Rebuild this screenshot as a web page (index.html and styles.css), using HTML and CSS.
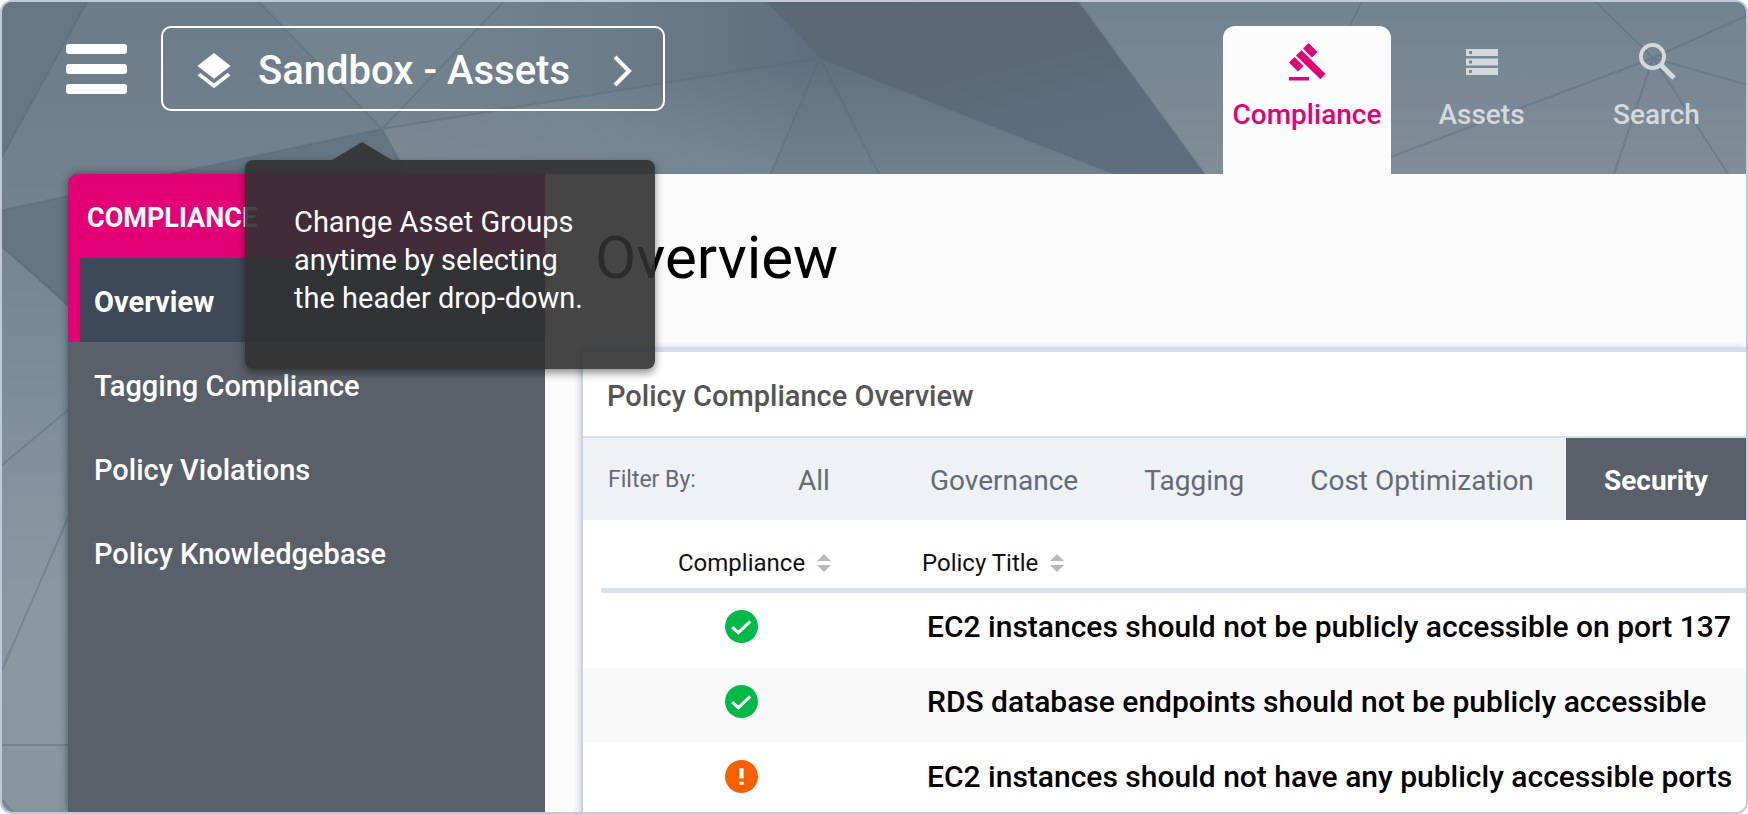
FILE: index.html
```html
<!DOCTYPE html>
<html lang="en">
<head>
<meta charset="utf-8">
<title>Policy Compliance Overview</title>
<link rel="stylesheet" href="styles.css">
</head>
<body>
<div class="app">
  <svg class="backdrop" viewBox="2 2 1744 810" preserveAspectRatio="xMinYMin slice" aria-hidden="true">
    <defs>
      <linearGradient id="base" x1="0" y1="0" x2="0" y2="1">
        <stop offset="0" stop-color="#6b7b88"/><stop offset=".22" stop-color="#72818e"/><stop offset=".5" stop-color="#7f8e9b"/><stop offset=".75" stop-color="#8a98a2"/><stop offset="1" stop-color="#87969e"/>
      </linearGradient>
      <linearGradient id="fan" x1="0" y1="0" x2="0" y2="1">
        <stop offset="0" stop-color="#5f707f"/><stop offset="1" stop-color="#71818e"/>
      </linearGradient>
      <linearGradient id="mid" x1="0" y1="0" x2="1" y2="0">
        <stop offset="0" stop-color="#74848f"/><stop offset=".5" stop-color="#6c7c89"/><stop offset="1" stop-color="#5f6f7f"/>
      </linearGradient>
      <linearGradient id="slope" x1="0" y1="1" x2="1" y2="0">
        <stop offset="0" stop-color="#7b8994"/><stop offset=".5" stop-color="#748491"/><stop offset="1" stop-color="#5f6f7f"/>
      </linearGradient>
      <linearGradient id="dark" x1="0" y1="0" x2=".6" y2="1">
        <stop offset="0" stop-color="#5a6975"/><stop offset=".5" stop-color="#5a6975"/><stop offset=".7" stop-color="#5e6d7d"/><stop offset="1" stop-color="#5e6e7f"/>
      </linearGradient>
      <linearGradient id="east" x1="0" y1="0" x2="0" y2="1">
        <stop offset="0" stop-color="#728390"/><stop offset="1" stop-color="#808e98"/>
      </linearGradient>
    </defs>
    <rect width="1748" height="814" fill="url(#base)"/>
    <path d="M0 0H88L2 157H0Z" fill="#667682"/>
    <path d="M257 0H505L382 129Z" fill="#738390"/>
    <path d="M505 0H765L820 58L382 129Z" fill="url(#mid)"/>
    <path d="M382 129L820 58L768 180H410Z" fill="url(#slope)"/>
    <path d="M820 58L768 180H1130Z" fill="url(#fan)"/>
    <path d="M765 0H1077L1209 180H1130L820 58Z" fill="url(#dark)"/>
    <path d="M1077 0H1748V180H1209Z" fill="url(#east)"/>
    <path d="M382 129L2 210V247L68 307L180 400L410 180Z" fill="#647583"/>
    <g class="seams">
      <path d="M88 0L2 157M257 0L382 129L505 0M382 129L820 58L765 0M930 0L820 58L768 180M820 58L882 180M820 58L1130 180M2 210L382 129L410 180M2 247L180 400M1077 0L1209 180M1363 0L1345 35M1594 0L1653 58L1748 15M1748 85L1653 58L1380 161M1653 58L1612 180M1653 58L1732 180M2 465L80 400M2 670L80 490M0 745H80M0 798L14 814"/>
    </g>
  </svg>

  <header class="topbar">
    <button class="menu" aria-label="Open menu"><span></span><span></span><span></span></button>
    <div class="picker">
      <button class="asset-group">
        <svg class="layers" viewBox="3 2 18 19.5" aria-hidden="true"><path fill="#fff" d="M11.99 18.54l-7.37-5.73L3 14.07l9 7 9-7-1.63-1.27-7.38 5.74zM12 16l7.36-5.73L21 9l-9-7-9 7 1.63 1.27L12 16z"/></svg>
        <span>Sandbox - Assets</span>
        <svg class="chevron" viewBox="0 0 20 32" aria-hidden="true"><path d="M3 2L17 16L3 30"/></svg>
      </button>
      <div class="tooltip" role="tooltip">Change Asset Groups<br>anytime by selecting<br>the header drop-down.</div>
    </div>
    <nav class="sections" aria-label="Sections">
      <a class="section current" href="#compliance">
        <svg viewBox="0 0 38 38" aria-hidden="true"><g fill="#e20074"><rect x="1" y="34" width="20" height="3.500"/><path d="M8 12.500L13.500 7.200L37.500 31L32.500 36.200Z"/><path d="M15 5.500L20.500 0L29.500 9L24 14.500Z"/><path d="M1 19.500L6.500 14L15.500 23L10 28.500Z"/></g></svg>
        Compliance
      </a>
      <a class="section" href="#assets">
        <svg viewBox="0 0 38 38" aria-hidden="true"><path fill="#d4d9dd" fill-rule="evenodd" d="M3 6H35V13H3ZM6 8V11H9V8ZM3 15.500H35V22.500H3ZM6 17.500V20.500H9V17.500ZM3 25H35V32H3ZM6 27V30H9V27Z"/></svg>
        Assets
      </a>
      <a class="section" href="#search">
        <svg viewBox="0 0 38 38" aria-hidden="true"><g fill="none" stroke="#d4d9dd" stroke-width="3.800"><circle cx="14.500" cy="13.500" r="11.600"/><path d="M23 22L36 35" stroke-width="5"/></g></svg>
        Search
      </a>
    </nav>
  </header>

  <div class="body">
    <aside class="sidebar">
      <h2>COMPLIANCE</h2>
      <nav aria-label="Compliance pages">
        <a class="active" href="#overview">Overview</a>
        <a href="#tagging">Tagging Compliance</a>
        <a href="#violations">Policy Violations</a>
        <a href="#knowledgebase">Policy Knowledgebase</a>
      </nav>
    </aside>
    <main class="main">
      <h1>Overview</h1>
      <section class="panel">
        <h3>Policy Compliance Overview</h3>
        <div class="filters">
          <span class="filter-label">Filter By:</span>
          <button>All</button>
          <button>Governance</button>
          <button>Tagging</button>
          <button>Cost Optimization</button>
          <button class="selected">Security</button>
        </div>
        <table>
          <thead>
            <tr>
              <th scope="col"><button>Compliance <svg viewBox="0 0 14 18" aria-hidden="true"><path d="M0 7L7 0L14 7ZM0 11H14L7 18Z"/></svg></button></th>
              <th scope="col"><button>Policy Title <svg viewBox="0 0 14 18" aria-hidden="true"><path d="M0 7L7 0L14 7ZM0 11H14L7 18Z"/></svg></button></th>
            </tr>
          </thead>
          <tbody>
            <tr>
              <td><svg class="status" viewBox="0 0 32 32" role="img" aria-label="Compliant"><circle cx="16" cy="16" r="16" fill="#00b946"/><path d="M7 16.500L13 22L24.500 11" fill="none" stroke="#fff" stroke-width="3"/></svg></td>
              <td>EC2 instances should not be publicly accessible on port 137</td>
            </tr>
            <tr>
              <td><svg class="status" viewBox="0 0 32 32" role="img" aria-label="Compliant"><circle cx="16" cy="16" r="16" fill="#00b946"/><path d="M7 16.500L13 22L24.500 11" fill="none" stroke="#fff" stroke-width="3"/></svg></td>
              <td>RDS database endpoints should not be publicly accessible</td>
            </tr>
            <tr>
              <td><svg class="status" viewBox="0 0 32 32" role="img" aria-label="Not compliant"><circle cx="16" cy="16" r="16" fill="#f95f00"/><path d="M14 8H18V18H14ZM14 21H18V24H14Z" fill="#fff"/></svg></td>
              <td>EC2 instances should not have any publicly accessible ports</td>
            </tr>
          </tbody>
        </table>
      </section>
    </main>
  </div>
</div>
</body>
</html>
```
FILE: styles.css
```css
* { box-sizing: border-box; }

body {
  margin: 0;
  font-family: Roboto, "Open Sans", sans-serif;
  background: #fff;
}

button { font: inherit; color: inherit; background: none; border: 0; padding: 0; }
a { color: inherit; text-decoration: none; }
h1, h2, h3 { margin: 0; }

.app {
  position: relative;
  display: flex;
  flex-direction: column;
  height: 100vh;
  border: 2px solid #bfc9d7;
  border-radius: 12px;
  overflow: hidden;
}

.backdrop { position: absolute; inset: 0; width: 100%; height: 100%; }
.seams { fill: none; stroke: #586877; stroke-opacity: .4; stroke-width: 2; }

.topbar {
  position: relative;
  z-index: 1;
  display: flex;
  align-items: flex-start;
  padding: 24px 0 0 64px;
}

.menu { display: flex; flex-direction: column; gap: 10px; margin: 18px 34px 0 0; }
.menu span { width: 61px; height: 10px; border-radius: 3px; background: #fff; }

.picker { position: relative; }
.asset-group {
  display: flex;
  align-items: center;
  width: 504px;
  height: 85px;
  padding: 4px 31px 0 34px;
  border: 2px solid #fff;
  border-radius: 10px;
  color: #fff;
  font-size: 40px;
  font-weight: 500;
}
.asset-group .chevron { margin-left: auto; }
.layers { width: 34px; height: 36px; margin-right: 27px; }
.chevron { width: 20px; height: 32px; fill: none; stroke: #fff; stroke-width: 4; }

.tooltip {
  position: absolute;
  top: 134px;
  left: 84px;
  width: 410px;
  height: 209px;
  padding: 43px 49px;
  border-radius: 8px;
  background: rgba(49, 49, 49, .9);
  box-shadow: 0 4px 8px rgba(0, 0, 0, .45);
  color: #fff;
  font-size: 29px;
  line-height: 38px;
  white-space: nowrap;
}
.tooltip::before {
  content: "";
  position: absolute;
  left: 87px;
  bottom: 100%;
  border: 30px solid transparent;
  border-top: 0;
  border-bottom: 18px solid #38393a;
}

.sections { display: flex; margin-left: auto; padding-right: 2px; }
.section {
  display: flex;
  flex-direction: column;
  align-items: center;
  width: 175px;
  height: 148px;
  padding-top: 17px;
  color: #d4d9dd;
  font-size: 28px;
  font-weight: 500;
  line-height: 34px;
}
.section svg { width: 38px; height: 38px; margin-bottom: 17px; }
.section.current { width: 168px; border-radius: 12px 12px 0 0; background: #fcfcfc; color: #e20074; margin-right: 3px; }

.body { position: relative; display: flex; flex: 1; min-height: 0; }

.sidebar {
  width: 477px;
  flex: none;
  margin-left: 66px;
  border-radius: 10px 0 0 0;
  background: #5a606a;
  box-shadow: 0 0 8px rgba(30, 40, 50, .6);
  color: #fff;
  font-size: 29px;
  font-weight: 500;
  line-height: 80px;
  overflow: hidden;
}
.sidebar h2 { padding: 4px 0 0 19px; background: #e20074; font-size: 27px; font-weight: 700; }
.sidebar a { display: block; padding: 4px 0 0 26px; }
.sidebar .active { padding-left: 14px; border-left: 12px solid #e20074; background: #3e4957; font-weight: 700; }

.main {
  position: relative;
  display: flex;
  flex-direction: column;
  flex: 1;
  min-width: 0;
  background: #fbfbfb;
}
.main h1 { padding: 50px 0 55px 50px; font-size: 60px; font-weight: 400; line-height: 68px; color: #000; }

.panel {
  flex: 1;
  margin-left: 36px;
  border-top: 5px solid #d3deea;
  border-left: 2px solid #c9d4e3;
  background: #fff;
  box-shadow: -2px 0 6px rgba(0, 0, 0, .15);
}
.panel h3 { padding: 4px 0 0 24px; border-bottom: 2px solid #dae0e8; color: #555; font-size: 29px; font-weight: 500; line-height: 80px; }

.filters { display: flex; align-items: stretch; height: 82px; background: #eef2f5; color: #646b76; font-size: 28px; }
.filter-label { width: 147px; padding: 2px 0 0 25px; font-size: 23px; line-height: 80px; }
.filters button { min-width: 168px; padding: 2px 32px 0; white-space: nowrap; }
.filters .selected { flex: 1; background: #5a606a; color: #fff; font-weight: 700; }

table { width: 100%; border-collapse: collapse; table-layout: fixed; }
thead tr { background: linear-gradient(#dce2e8, #dce2e8) 18px 100% / 100% 5px no-repeat; }
th { height: 73px; padding: 12px 0 0 22px; text-align: left; font-size: 24px; font-weight: 400; }
th:first-child { width: 317px; padding-left: 95px; }
th button { display: flex; align-items: center; gap: 12px; color: #111; }
th svg { width: 14px; height: 18px; fill: #b8b8b8; }
td { height: 75px; padding: 0 0 8px 27px; color: #000; font-size: 30px; font-weight: 500; white-space: nowrap; }
td:first-child { padding: 0 0 12px; text-align: center; }
tbody tr:nth-child(even) { background: #f8f8f8; }
.status { display: inline-block; width: 33px; height: 33px; vertical-align: middle; }
```
